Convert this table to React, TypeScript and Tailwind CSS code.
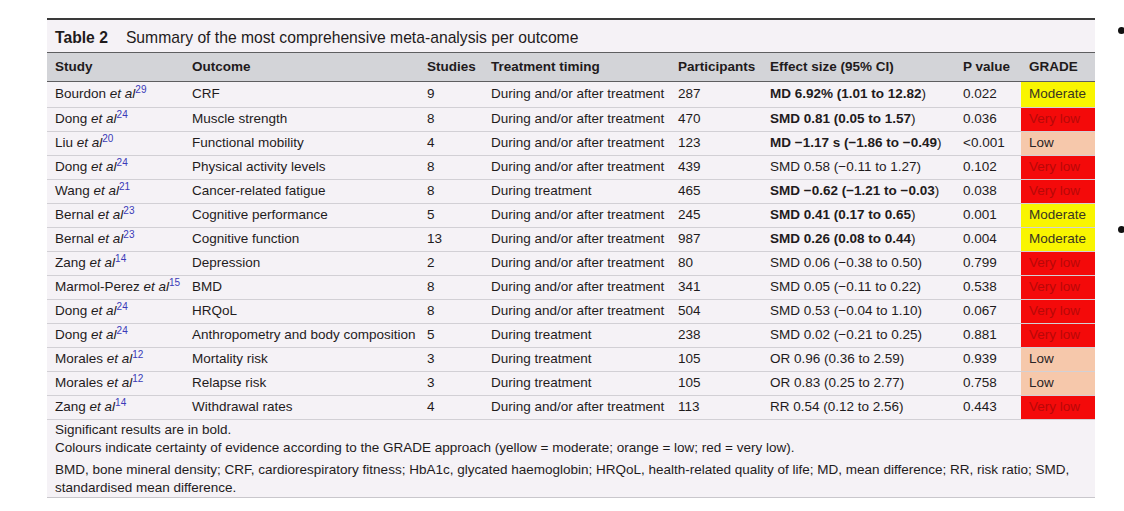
import React from "react"

type Grade = "Moderate" | "Low" | "Very low"

interface Row {
  author: string
  ref: string
  outcome: string
  studies: string
  timing: string
  participants: string
  effect: string
  bold: boolean
  p: string
  grade: Grade
}

const rows: Row[] = [
  { author: "Bourdon", ref: "29", outcome: "CRF", studies: "9", timing: "During and/or after treatment", participants: "287", effect: "MD 6.92% (1.01 to 12.82", bold: true, p: "0.022", grade: "Moderate" },
  { author: "Dong", ref: "24", outcome: "Muscle strength", studies: "8", timing: "During and/or after treatment", participants: "470", effect: "SMD 0.81 (0.05 to 1.57", bold: true, p: "0.036", grade: "Very low" },
  { author: "Liu", ref: "20", outcome: "Functional mobility", studies: "4", timing: "During and/or after treatment", participants: "123", effect: "MD −1.17 s (−1.86 to −0.49", bold: true, p: "<0.001", grade: "Low" },
  { author: "Dong", ref: "24", outcome: "Physical activity levels", studies: "8", timing: "During and/or after treatment", participants: "439", effect: "SMD 0.58 (−0.11 to 1.27", bold: false, p: "0.102", grade: "Very low" },
  { author: "Wang", ref: "21", outcome: "Cancer-related fatigue", studies: "8", timing: "During treatment", participants: "465", effect: "SMD −0.62 (−1.21 to −0.03", bold: true, p: "0.038", grade: "Very low" },
  { author: "Bernal", ref: "23", outcome: "Cognitive performance", studies: "5", timing: "During and/or after treatment", participants: "245", effect: "SMD 0.41 (0.17 to 0.65", bold: true, p: "0.001", grade: "Moderate" },
  { author: "Bernal", ref: "23", outcome: "Cognitive function", studies: "13", timing: "During and/or after treatment", participants: "987", effect: "SMD 0.26 (0.08 to 0.44", bold: true, p: "0.004", grade: "Moderate" },
  { author: "Zang", ref: "14", outcome: "Depression", studies: "2", timing: "During and/or after treatment", participants: "80", effect: "SMD 0.06 (−0.38 to 0.50", bold: false, p: "0.799", grade: "Very low" },
  { author: "Marmol-Perez", ref: "15", outcome: "BMD", studies: "8", timing: "During and/or after treatment", participants: "341", effect: "SMD 0.05 (−0.11 to 0.22", bold: false, p: "0.538", grade: "Very low" },
  { author: "Dong", ref: "24", outcome: "HRQoL", studies: "8", timing: "During and/or after treatment", participants: "504", effect: "SMD 0.53 (−0.04 to 1.10", bold: false, p: "0.067", grade: "Very low" },
  { author: "Dong", ref: "24", outcome: "Anthropometry and body composition", studies: "5", timing: "During treatment", participants: "238", effect: "SMD 0.02 (−0.21 to 0.25", bold: false, p: "0.881", grade: "Very low" },
  { author: "Morales", ref: "12", outcome: "Mortality risk", studies: "3", timing: "During treatment", participants: "105", effect: "OR 0.96 (0.36 to 2.59", bold: false, p: "0.939", grade: "Low" },
  { author: "Morales", ref: "12", outcome: "Relapse risk", studies: "3", timing: "During treatment", participants: "105", effect: "OR 0.83 (0.25 to 2.77", bold: false, p: "0.758", grade: "Low" },
  { author: "Zang", ref: "14", outcome: "Withdrawal rates", studies: "4", timing: "During and/or after treatment", participants: "113", effect: "RR 0.54 (0.12 to 2.56", bold: false, p: "0.443", grade: "Very low" },
]

const gradeStyle: Record<Grade, string> = {
  Moderate: "bg-[#f9f500] text-[#3a3520]",
  Low: "bg-[#f6c8ab] text-[#2a2325]",
  "Very low": "bg-[#f40a0a] text-[#b80808]",
}

const headers = ["Study", "Outcome", "Studies", "Treatment timing", "Participants", "Effect size (95% CI)", "P value", "GRADE"]

export default function App() {
  return (
    <div className="flex h-[511px] w-[1124px] overflow-hidden bg-white pl-[47px] text-[#1f1b1c] font-['Liberation_Sans',Arial,sans-serif]">
      <div className="mt-[18px] w-[1048px] shrink-0 self-start border-t-2 border-[#3a3a3a] bg-[#f5f2f6]">
        <div className="flex h-[33px] items-center border-b border-[#5e5e60] px-2 pt-[4px] text-[15.7px]">
          <span className="font-bold">Table 2</span>
          <span className="ml-[18px]">Summary of the most comprehensive meta-analysis per outcome</span>
        </div>
        <table className="w-full table-fixed border-collapse text-[13.5px]">
          <colgroup>
            <col className="w-[137px]" />
            <col className="w-[235px]" />
            <col className="w-[64px]" />
            <col className="w-[187px]" />
            <col className="w-[92px]" />
            <col className="w-[193px]" />
            <col className="w-[66px]" />
            <col className="w-[74px]" />
          </colgroup>
          <thead>
            <tr className="h-[28px] border-b border-[#5e5e60] bg-[#d3d4d8]">
              {headers.map((h) => (
                <th key={h} className="whitespace-nowrap px-2 pt-[1px] text-left font-bold">
                  {h}
                </th>
              ))}
            </tr>
          </thead>
          <tbody>
            {rows.map((r, i) => (
              <tr key={i} className={`border-b border-[#d2d0d5] ${i === 0 ? "h-[26px]" : "h-[24px]"}`}>
                <td className="whitespace-nowrap px-2">
                  {r.author} <i>et al</i>
                  <sup className="text-[10px] text-[#3a3ab8]">{r.ref}</sup>
                </td>
                <td className="whitespace-nowrap px-2">{r.outcome}</td>
                <td className="px-2">{r.studies}</td>
                <td className="whitespace-nowrap px-2">{r.timing}</td>
                <td className="px-2">{r.participants}</td>
                <td className="whitespace-nowrap px-2">
                  <span className={r.bold ? "font-bold" : ""}>{r.effect}</span>)
                </td>
                <td className="px-2">{r.p}</td>
                <td className={`whitespace-nowrap px-2 ${gradeStyle[r.grade]}`}>{r.grade}</td>
              </tr>
            ))}
          </tbody>
        </table>
        <div className="border-b border-[#c9c7cc] px-2 pt-[1px] text-[13.5px] leading-[18px]">
          <p>Significant results are in bold.</p>
          <p>Colours indicate certainty of evidence according to the GRADE approach (yellow = moderate; orange = low; red = very low).</p>
          <p className="mt-[4px]">
            BMD, bone mineral density; CRF, cardiorespiratory fitness; HbA1c, glycated haemoglobin; HRQoL, health-related quality of life; MD, mean difference; RR, risk ratio; SMD,
            standardised mean difference.
          </p>
        </div>
      </div>
      <div className="ml-[23px] flex flex-col">
        <div className="mt-[27px] h-[7px] w-[7px] rounded-full bg-[#111]" />
        <div className="mt-[192px] h-[7px] w-[7px] rounded-full bg-[#111]" />
      </div>
    </div>
  )
}
